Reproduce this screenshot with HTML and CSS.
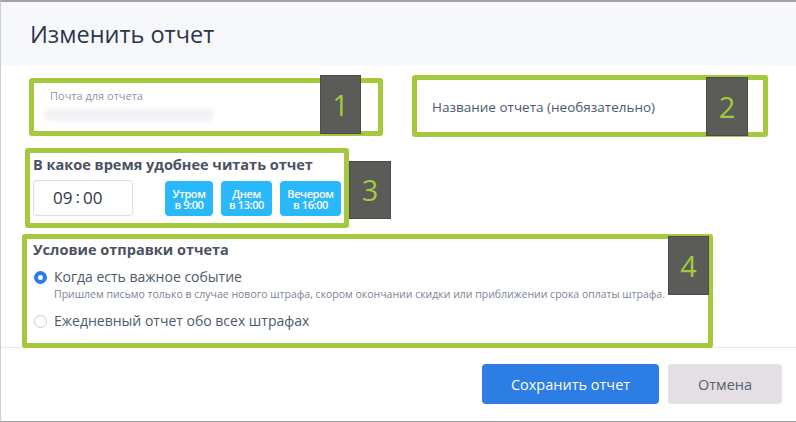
FILE: index.html
```html
<!DOCTYPE html>
<html>
  <head>
    <title>Изменить отчет</title>
    <link rel="stylesheet" href="styles.css">
  </head>
  <body>

    <div class="modal">

      <div class="modal-header">
        <h1>Изменить отчет</h1>
      </div>

      <div class="modal-body">

        <div class="row">
          <div class="note note-email">
            <div class="field-label">Почта для отчета</div>
            <div class="field-value"></div>
            <span class="badge">1</span>
          </div>
          <div class="note note-name">
            <div class="field-placeholder">Название отчета (необязательно)</div>
            <span class="badge">2</span>
          </div>
        </div>

        <div class="note note-time">
          <div class="section-title">В какое время удобнее читать отчет</div>
          <div class="time-row">
            <div class="time-input">09<span class="colon">:</span>00</div>
            <div class="presets">
              <button class="preset preset-morning"><span>Утром</span><span>в 9:00</span></button>
              <button class="preset preset-day"><span>Днем</span><span>в 13:00</span></button>
              <button class="preset preset-evening"><span>Вечером</span><span>в 16:00</span></button>
            </div>
          </div>
          <span class="badge">3</span>
        </div>

        <div class="note note-cond">
          <div class="section-title">Условие отправки отчета</div>
          <label class="radio-row">
            <span class="radio checked"></span>
            <span>Когда есть важное событие</span>
          </label>
          <div class="radio-hint">Пришлем письмо только в случае нового штрафа, скором окончании скидки или приближении срока оплаты штрафа.</div>
          <label class="radio-row">
            <span class="radio"></span>
            <span>Ежедневный отчет обо всех штрафах</span>
          </label>
          <span class="badge">4</span>
        </div>

      </div>

      <div class="modal-footer">
        <button class="btn btn-primary">Сохранить отчет</button>
        <button class="btn btn-cancel">Отмена</button>
      </div>

    </div>

  </body>
</html>
```

FILE: styles.css
```css
html, body {
  margin: 0;
  height: 100%;
}

body {
  font-family: "Open Sans", "Liberation Sans", sans-serif;
  color: #4a5466;
  background: #fff;
}

.modal {
  width: 796px;
  height: 422px;
  box-sizing: border-box;
  border-top: 2px solid #a3a3a3;
  border-left: 1px solid #cfcfcf;
  border-bottom: 1px solid #9c9c9c;
  display: flex;
  flex-direction: column;
}

/* Header */

.modal-header {
  height: 63px;
  background-color: #f7f8fc;
  display: flex;
  align-items: center;
  padding-left: 29px;
}

.modal-header h1 {
  margin: 0;
  font-size: 23.5px;
  font-weight: 400;
  color: #2c3646;
}

/* Body */

.modal-body {
  height: 282px;
  position: relative;
  z-index: 1;
}

.row {
  display: flex;
  align-items: flex-start;
  padding: 10px 0 0 28px;
}

/* green marker frames */
.note {
  position: relative;
  border: 5px solid #a4c93f;
  border-radius: 3px;
  box-sizing: border-box;
  background: #fff;
}

.badge {
  position: absolute;
  width: 41px;
  height: 59px;
  box-sizing: border-box;
  background-color: #5b5b57;
  border: 1px solid #4b4b47;
  color: #a4c93f;
  font-size: 29px;
  line-height: 57px;
  text-align: center;
}

.note-email {
  width: 354px;
  height: 58px;
  margin-top: 3px;
  padding: 5px 0 0 16px;
}

.note-email .badge { left: 286px; top: -8px; }

.field-label {
  font-size: 11px;
  line-height: 15px;
  color: #8e97a6;
}

.field-value {
  width: 170px;
  height: 12px;
  margin: 6px 0 0 -6px;
  border-radius: 6px;
  background-color: #f1f2f5;
  filter: blur(2px);
}

.note-name {
  width: 356px;
  height: 62px;
  margin-left: 29px;
  padding-left: 15px;
  display: flex;
  align-items: center;
}

.note-name .badge { left: 289px; top: -3px; width: 42px; }

.field-placeholder {
  font-size: 13.5px;
  color: #4d5a6c;
  position: relative;
  top: 1px;
}

.note-time {
  width: 324px;
  height: 80px;
  margin: 11px 0 0 24px;
  padding: 2px 0 0 3px;
}

.note-time .badge { left: 319px; top: 8px; width: 42px; height: 58px; line-height: 56px; }

.section-title {
  font-size: 14.5px;
  font-weight: 700;
  line-height: 19px;
  color: #4b5262;
}

.time-row {
  display: flex;
  align-items: center;
  margin-top: 6px;
}

.time-input {
  width: 100px;
  height: 36px;
  box-sizing: border-box;
  border: 1px solid #d7dee8;
  border-radius: 4px;
  padding-left: 19px;
  font-size: 17px;
  line-height: 34px;
  color: #2d3646;
}

.colon {
  margin: 0 3px;
  position: relative;
  top: -1px;
}

.presets {
  display: flex;
  gap: 8px;
  margin-left: 32px;
}

.preset {
  height: 35px;
  padding: 1px 0 0;
  border: none;
  border-radius: 4px;
  background-color: #29b9fb;
  color: #fff;
  font-family: "Open Sans", "Liberation Sans", sans-serif;
  font-size: 11px;
  font-weight: 600;
  letter-spacing: -0.4px;
  display: flex;
  flex-direction: column;
  align-items: center;
  justify-content: center;
}

.preset span {
  display: block;
  height: 11px;
  line-height: 11px;
}

.preset-morning { width: 48px; }
.preset-day { width: 51px; }
.preset-evening { width: 61px; }

.note-cond {
  width: 691px;
  height: 114px;
  margin: 6px 0 0 21px;
  padding: 1px 0 0 6px;
}

.note-cond .badge { left: 641px; top: -3px; }

.radio-row {
  display: flex;
  align-items: center;
  gap: 7px;
  margin-top: 8px;
  font-size: 14px;
  line-height: 20px;
  color: #4d5a6c;
}

.radio {
  width: 13px;
  height: 13px;
  box-sizing: border-box;
  border-radius: 50%;
  border: 1px solid #c6ccd6;
  background: #fff;
  margin-left: 1px;
}

.radio.checked {
  border: 4px solid #2c7ce6;
}

.radio-hint {
  margin-left: 21px;
  font-size: 10.5px;
  line-height: 15px;
  color: #7b8494;
}

.radio-hint + .radio-row {
  margin-top: 9px;
}

/* Footer */

.modal-footer {
  flex: 1;
  border-top: 1px solid #e2e8ef;
  display: flex;
  justify-content: flex-end;
  align-items: flex-start;
  gap: 9px;
  padding: 16px 14px 0 0;
}

.btn {
  height: 40px;
  border: none;
  border-radius: 4px;
  font-family: "Open Sans", "Liberation Sans", sans-serif;
  font-size: 14.5px;
}

.btn-primary {
  width: 177px;
  background-color: #2c7de4;
  color: #fff;
}

.btn-cancel {
  width: 114px;
  background-color: #e4dfe4;
  color: #586070;
}
```
